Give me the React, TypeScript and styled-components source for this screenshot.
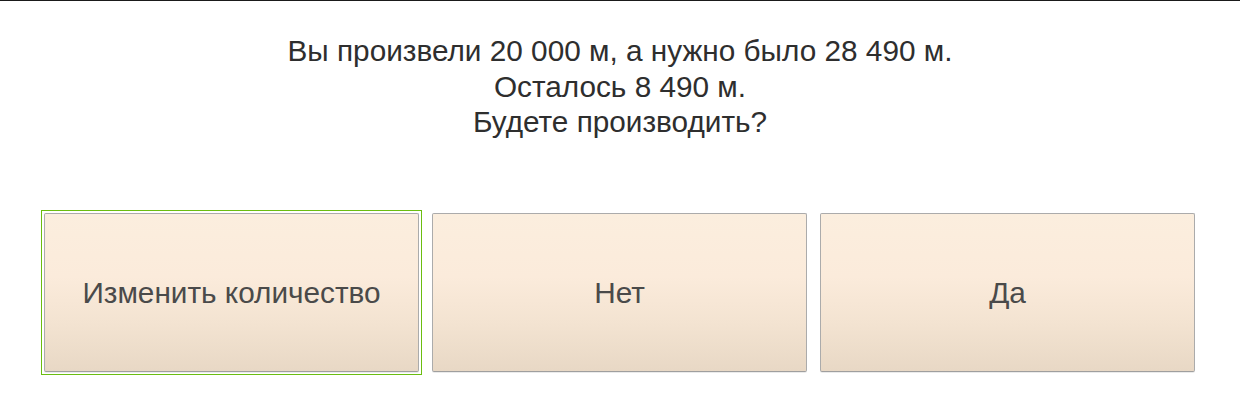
import React from "react";
import styled, { createGlobalStyle, css } from "styled-components";

const Global = createGlobalStyle`
  html, body { margin: 0; padding: 0; background: #fff; }
  body { font-family: "Liberation Sans", Arial, sans-serif; }
`;

const Page = styled.div`
  width: 1240px;
  height: 417px;
  box-sizing: border-box;
  border-top: 1px solid #1a1a1a;
  display: flex;
  flex-direction: column;
`;

const Message = styled.div`
  padding-top: 32px;
  text-align: center;
  font-size: 29.75px;
  line-height: 35.5px;
  color: #2e2e2e;
`;

const Row = styled.div`
  margin-top: 73.5px;
  padding: 0 45px 0 44px;
  display: grid;
  grid-template-columns: repeat(3, 375px);
  column-gap: 13px;
`;

const Button = styled.button<{ $focused?: boolean }>`
  position: relative;
  height: 159px;
  box-sizing: border-box;
  border: 1px solid #ababab;
  border-bottom-color: #9f9f9f;
  border-radius: 2px;
  background: linear-gradient(to bottom, #fbeede 0%, #fbebdb 40%, #f3e3d1 70%, #e8d8c5 100%);
  box-shadow: 0 1px 0 rgba(0, 0, 0, 0.08);
  font-family: "Liberation Sans", Arial, sans-serif;
  font-size: 29.75px;
  color: #4a4a4a;
  padding: 0;
  cursor: pointer;
  outline: none;

  ${p =>
    p.$focused &&
    css`
      &::before {
        content: "";
        position: absolute;
        inset: -4px;
        border: 1px solid #6bbd10;
        pointer-events: none;
      }
    `}
`;

export default function App() {
  return (
    <>
      <Global />
      <Page>
        <Message>
          Вы произвели 20 000 м, а нужно было 28 490 м.
          <br />
          Осталось 8 490 м.
          <br />
          Будете производить?
        </Message>
        <Row>
          <Button $focused>Изменить количество</Button>
          <Button>Нет</Button>
          <Button>Да</Button>
        </Row>
      </Page>
    </>
  );
}
